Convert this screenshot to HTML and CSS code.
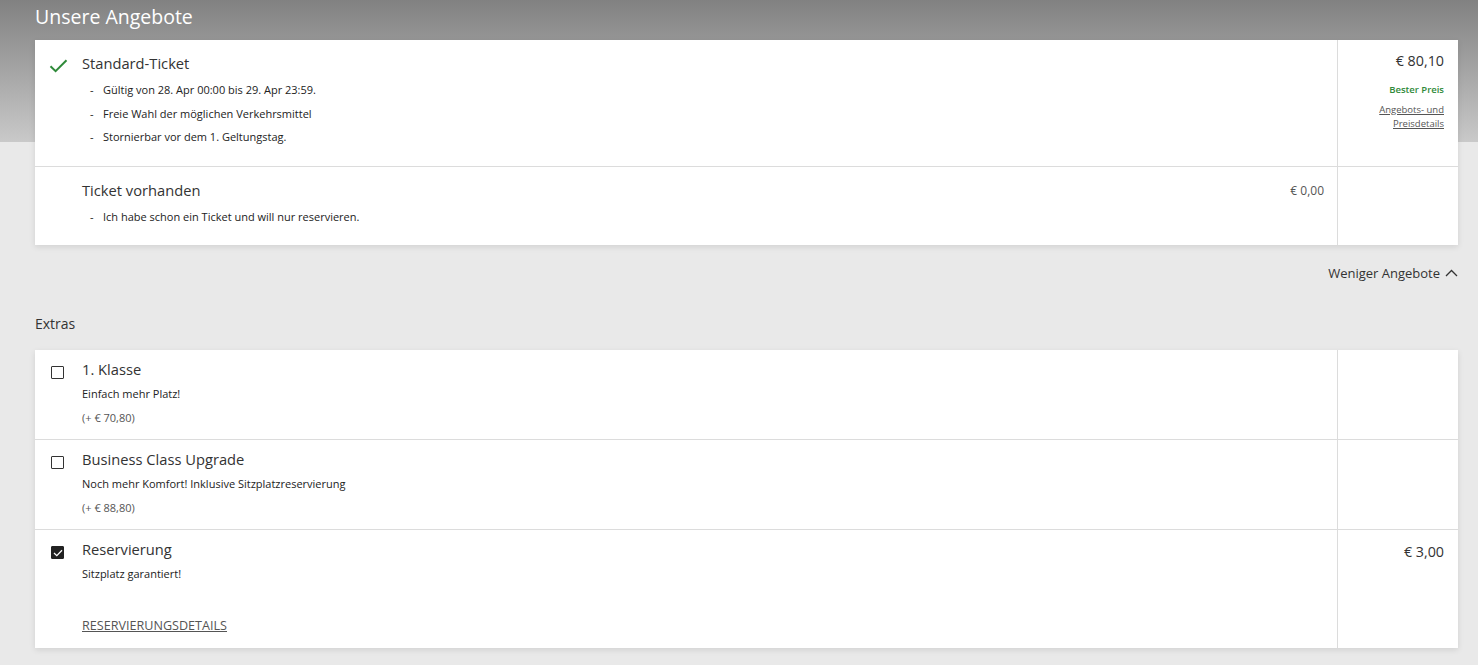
FILE: index.html
```html
<!DOCTYPE html>
<html lang="de">
<head>
<meta charset="utf-8">
<title>Unsere Angebote</title>
<link rel="stylesheet" href="styles.css">
</head>
<body>
<div class="page">
  <h1 class="page-title">Unsere Angebote</h1>

  <section class="card">
    <div class="row">
      <div class="row-main">
        <span class="lead-icon">
          <svg width="19" height="14" viewBox="0 0 19 14"><path d="M1.5 7.2 L6.6 12.2 L17.5 1.3" fill="none" stroke="#2f8a3a" stroke-width="2"/></svg>
        </span>
        <div class="row-body">
          <div class="title">Standard-Ticket</div>
          <ul class="dash-list">
            <li>Gültig von 28. Apr 00:00 bis 29. Apr 23:59.</li>
            <li>Freie Wahl der möglichen Verkehrsmittel</li>
            <li>Stornierbar vor dem 1. Geltungstag.</li>
          </ul>
        </div>
      </div>
      <div class="row-side">
        <div class="price">€ 80,10</div>
        <div class="best">Bester Preis</div>
        <a class="details" href="#">Angebots- und<br>Preisdetails</a>
      </div>
    </div>
    <div class="row">
      <div class="row-main">
        <span class="lead-icon"></span>
        <div class="row-body">
          <div class="title">Ticket vorhanden</div>
          <ul class="dash-list">
            <li>Ich habe schon ein Ticket und will nur reservieren.</li>
          </ul>
        </div>
        <div class="inline-price">€ 0,00</div>
      </div>
      <div class="row-side"></div>
    </div>
  </section>

  <div class="toggle-bar">
    <a class="toggle" href="#">Weniger Angebote
      <svg width="13" height="8" viewBox="0 0 13 8"><path d="M1 7 L6.5 1.5 L12 7" fill="none" stroke="#333" stroke-width="1.3"/></svg>
    </a>
  </div>

  <h2 class="section-title">Extras</h2>

  <section class="card">
    <div class="row extra">
      <div class="row-main">
        <span class="lead-icon"><span class="checkbox"></span></span>
        <div class="row-body">
          <div class="title">1. Klasse</div>
          <div class="desc">Einfach mehr Platz!</div>
          <div class="addon">(+ € 70,80)</div>
        </div>
      </div>
      <div class="row-side"></div>
    </div>
    <div class="row extra">
      <div class="row-main">
        <span class="lead-icon"><span class="checkbox"></span></span>
        <div class="row-body">
          <div class="title">Business Class Upgrade</div>
          <div class="desc">Noch mehr Komfort! Inklusive Sitzplatzreservierung</div>
          <div class="addon">(+ € 88,80)</div>
        </div>
      </div>
      <div class="row-side"></div>
    </div>
    <div class="row extra">
      <div class="row-main">
        <span class="lead-icon"><span class="checkbox checked">
          <svg width="10" height="8" viewBox="0 0 10 8"><path d="M1 4 L3.8 6.7 L9 1.3" fill="none" stroke="#fff" stroke-width="1.3"/></svg>
        </span></span>
        <div class="row-body">
          <div class="title">Reservierung</div>
          <div class="desc">Sitzplatz garantiert!</div>
          <a class="res-link" href="#">RESERVIERUNGSDETAILS</a>
        </div>
      </div>
      <div class="row-side">
        <div class="price">€ 3,00</div>
      </div>
    </div>
  </section>
</div>
</body>
</html>
```

FILE: styles.css
```css
html, body {
  margin: 0;
  padding: 0;
}
body {
  font-family: "Open Sans", "Noto Sans", sans-serif;
  color: #333;
  background: linear-gradient(to bottom, #818181 0px, #c9c9c9 142px, #e9e9e9 142px, #e9e9e9 100%);
  min-height: 665px;
}
.page {
  padding: 0 20px 0 35px;
}
.page-title {
  margin: 0;
  height: 40px;
  line-height: 33px;
  font-size: 19.5px;
  font-weight: 400;
  color: #fff;
}
.card {
  background: #fff;
  box-shadow: 0 2px 6px rgba(0,0,0,0.10);
}
.row {
  display: flex;
  border-top: 1px solid #dcdcdc;
}
.row:first-child {
  border-top: none;
}
.row-main {
  flex: 1;
  display: flex;
  padding: 13px 13px 17px 14px;
  border-right: 1px solid #dcdcdc;
}
.lead-icon {
  width: 33px;
  flex: none;
  padding-top: 3px;
}
.row-body {
  flex: 1;
}
.title {
  font-size: 14.7px;
  line-height: 20px;
}
.dash-list {
  list-style: none;
  margin: 5px 0 0 0;
  padding: 0;
}
.dash-list li {
  font-size: 11px;
  line-height: 23.5px;
  padding-left: 21px;
  position: relative;
  color: #222;
}
.dash-list li::before {
  content: "-";
  position: absolute;
  left: 8px;
}
.inline-price {
  font-size: 12px;
  color: #555;
  padding-top: 2px;
}
.row-side {
  width: 106px;
  flex: none;
  padding: 11px 14px 0 0;
  text-align: right;
}
.price {
  font-size: 14.3px;
  line-height: 20px;
}
.best {
  font-size: 9.5px;
  font-weight: 600;
  color: #2f8a3a;
  margin-top: 12px;
}
.details {
  display: block;
  margin-top: 7px;
  font-size: 9.5px;
  line-height: 14px;
  color: #555;
}
.toggle-bar {
  display: flex;
  justify-content: flex-end;
  padding-top: 19px;
  height: 18px;
}
.toggle {
  font-size: 13px;
  color: #333;
  text-decoration: none;
  display: flex;
  align-items: center;
  gap: 5px;
  height: 18px;
}
.section-title {
  margin: 32px 0 16px;
  font-size: 14px;
  font-weight: 400;
  line-height: 20px;
}
.extra .row-main {
  padding: 9px 13px 9px 16px;
}
.extra .lead-icon {
  width: 31px;
  padding-top: 7px;
}
.checkbox {
  display: flex;
  align-items: center;
  justify-content: center;
  width: 11px;
  height: 11px;
  border: 1.5px solid #333;
  border-radius: 1px;
}
.checkbox.checked {
  background: #222;
  border-color: #222;
}
.desc {
  font-size: 11px;
  line-height: 24px;
  margin-top: 3px;
  color: #222;
}
.addon {
  font-size: 11px;
  line-height: 24px;
  color: #555;
}
.res-link {
  display: block;
  margin: 32px 0 5px;
  font-size: 12.6px;
  line-height: 16px;
  color: #555;
}
.extra .row-side {
  padding-top: 12px;
}
```
